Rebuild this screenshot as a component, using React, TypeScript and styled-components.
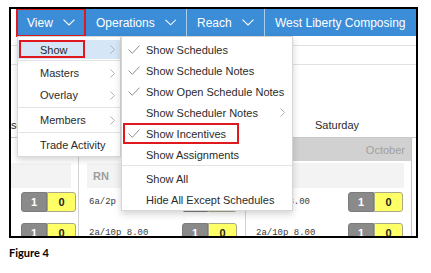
import React from "react";
import styled, { createGlobalStyle } from "styled-components";

const Global = createGlobalStyle`
  html, body { margin: 0; padding: 0; background: #fff; }
  body { font-family: "Liberation Sans", Arial, sans-serif; }
  * { box-sizing: border-box; }
`;

const Page = styled.div`
  width: 431px;
  height: 273px;
  padding: 7px 0 0 9px;
`;

const Frame = styled.div`
  position: relative;
  width: 409px;
  height: 231px;
  border: 2px solid #000;
  overflow: hidden;
  display: flex;
  flex-direction: column;
  background: #fff;
`;

const TopBar = styled.div`
  display: flex;
  height: 27px;
  padding-left: 6px;
  flex: none;
  position: relative;
  z-index: 3;
`;

const NavGroup = styled.div`
  flex: 1;
  display: flex;
  gap: 1px;
  background: #a9cdec;
`;

const NavItem = styled.div<{ $w?: number; $marked?: boolean }>`
  position: relative;
  display: flex;
  align-items: center;
  gap: 10px;
  padding: 0 10px;
  background: #3a8dd6;
  color: #fff;
  font-size: 12px;
  white-space: nowrap;
  ${(p) => (p.$w ? `width: ${p.$w}px; flex: none;` : "flex: 1;")}
  ${(p) => (p.$marked ? "outline: 2px solid #e0191e; outline-offset: -1px;" : "")}
`;

const Dropdown = styled.div`
  position: absolute;
  top: 100%;
  left: 0;
  width: 104px;
  background: #fff;
  border: 1px solid #d9d9d9;
  box-shadow: 0 3px 6px rgba(0, 0, 0, 0.16);
  padding-top: 3px;
  color: #2b2b2b;
  font-size: 11px;
  z-index: 5;
`;

const MenuItem = styled.div<{ $h?: number; $active?: boolean }>`
  position: relative;
  display: flex;
  align-items: center;
  height: ${(p) => p.$h ?? 22}px;
  padding: 0 5px 0 22px;
  background: ${(p) => (p.$active ? "#d5e6f6" : "transparent")};
`;

const Label = styled.span`
  flex: 1;
  white-space: nowrap;
`;

const Separator = styled.div<{ $m?: string }>`
  height: 1px;
  background: #e4e4e4;
  margin: ${(p) => p.$m ?? "1px 0"};
`;

const Submenu = styled.div`
  position: absolute;
  left: 103px;
  top: -4px;
  width: 172px;
  background: #fff;
  border: 1px solid #d6d6d6;
  box-shadow: 0 3px 7px rgba(0, 0, 0, 0.18);
  padding-top: 2px;
  color: #2b2b2b;
  font-size: 11px;
`;

const SubItem = styled.div`
  position: relative;
  display: flex;
  align-items: center;
  height: 21px;
  padding: 0 7px 0 6px;
`;

const CheckSlot = styled.span`
  width: 12px;
  height: 9px;
  margin-right: 6px;
  flex: none;
  display: flex;
`;

const Annotation = styled.div<{ $l: number; $t: number; $w: number; $h: number }>`
  position: absolute;
  left: ${(p) => p.$l}px;
  top: ${(p) => p.$t}px;
  width: ${(p) => p.$w}px;
  height: ${(p) => p.$h}px;
  border: 2px solid #e0191e;
  pointer-events: none;
`;

const Strip = styled.div<{ $h: number }>`
  height: ${(p) => p.$h + 1}px;
  border-bottom: 1px solid #e2e2e2;
  flex: none;
`;

const Columns = styled.div`
  display: grid;
  grid-template-columns: 67px 167px 167px;
`;

const DayHeader = styled(Columns)`
  height: 72px;
  flex: none;
`;

const DayName = styled.div<{ $indent?: number }>`
  display: flex;
  align-items: flex-end;
  padding: 0 0 5px ${(p) => p.$indent ?? 0}px;
  font-size: 11px;
  line-height: 13px;
  color: #2b2b2b;
  white-space: nowrap;
  overflow: hidden;
`;

const Grid = styled(Columns)`
  flex: 1;
  border-top: 1px solid #c9c9c9;
`;

const DayCol = styled.div<{ $first?: boolean; $last?: boolean }>`
  display: flex;
  flex-direction: column;
  border-left: ${(p) => (p.$first ? "none" : "1px solid #d2d2d2")};
  border-right: ${(p) => (p.$last ? "1px solid #c4c4c4" : "none")};
  min-width: 0;
  overflow: hidden;
`;

const DateHead = styled.div<{ $shaded?: boolean }>`
  height: 23px;
  display: flex;
  align-items: center;
  justify-content: space-between;
  padding: 0 6px 0 9px;
  background: ${(p) => (p.$shaded ? "#d1d1d1" : "transparent")};
  font-size: 11px;
  color: #a0a0a0;
  white-space: nowrap;
`;

const DateNum = styled.span`
  font-size: 12px;
  color: #8a8a8a;
  padding-top: 5px;
`;

const Band = styled.div<{ $flush?: boolean }>`
  height: 25px;
  margin: 2px 7px 0 ${(p) => (p.$flush ? 0 : 8)}px;
  background: #f3f3f3;
  display: flex;
  align-items: center;
  padding-left: 6px;
  font-size: 11px;
  font-weight: bold;
  color: #9d9d9d;
`;

const ShiftList = styled.div`
  display: flex;
  flex-direction: column;
  gap: 11px;
  padding-top: 4px;
`;

const ShiftRow = styled.div`
  height: 20px;
  display: flex;
  align-items: center;
  padding: 0 8px 0 10px;
`;

const ShiftText = styled.span`
  font-family: "Liberation Mono", "Courier New", monospace;
  font-size: 9px;
  color: #3a3a3a;
  white-space: pre;
`;

const Pair = styled.div`
  margin-left: auto;
  display: flex;
  height: 20px;
  flex: none;
`;

const Count = styled.div<{ $kind: "grey" | "yellow" }>`
  display: flex;
  align-items: center;
  justify-content: center;
  font-size: 11px;
  font-weight: bold;
  width: ${(p) => (p.$kind === "grey" ? 26 : 29)}px;
  background: ${(p) => (p.$kind === "grey" ? "#8a8a8a" : "#ffff66")};
  color: ${(p) => (p.$kind === "grey" ? "#fff" : "#222")};
  border: 1px solid ${(p) => (p.$kind === "grey" ? "#7c7c7c" : "#a9a98a")};
  border-radius: ${(p) => (p.$kind === "grey" ? "3px 0 0 3px" : "0 3px 3px 0")};
`;

const Caption = styled.div`
  margin-top: 8px;
  font-family: Lato, "Open Sans", sans-serif;
  font-weight: bold;
  font-size: 11px;
  line-height: 14px;
  color: #000;
`;

const Chevron = () => (
  <svg width="12" height="7" viewBox="0 0 12 7">
    <polyline points="0.5,0.6 6,6 11.5,0.6" fill="none" stroke="#fff" strokeWidth="1.1" />
  </svg>
);

const Arrow = () => (
  <svg width="5" height="9" viewBox="0 0 5 9">
    <polyline points="0.5,0.5 4.5,4.5 0.5,8.5" fill="none" stroke="#b0b0b0" strokeWidth="1" />
  </svg>
);

const Check = () => (
  <svg width="12" height="9" viewBox="0 0 12 9">
    <polyline points="0.5,4.5 4.3,8.3 11.5,0.6" fill="none" stroke="#8e8e8e" strokeWidth="1" />
  </svg>
);

const subItems: { label: string; checked?: boolean; more?: boolean; marked?: boolean; sepAfter?: boolean }[] = [
  { label: "Show Schedules", checked: true },
  { label: "Show Schedule Notes", checked: true },
  { label: "Show Open Schedule Notes", checked: true },
  { label: "Show Scheduler Notes", more: true },
  { label: "Show Incentives", checked: true, marked: true },
  { label: "Show Assignments", sepAfter: true },
  { label: "Show All" },
  { label: "Hide All Except Schedules" },
];

const Badges = () => (
  <Pair>
    <Count $kind="grey">1</Count>
    <Count $kind="yellow">0</Count>
  </Pair>
);

export default function App() {
  return (
    <>
      <Global />
      <Page>
        <Frame>
          <TopBar>
            <NavGroup>
              <NavItem $w={68} $marked>
                <span>View</span>
                <Chevron />
                <Dropdown>
                  <MenuItem $h={19} $active>
                    <Annotation $l={1} $t={0} $w={66} $h={18} />
                    <Label>Show</Label>
                    <Arrow />
                    <Submenu>
                      {subItems.map((it) => (
                        <React.Fragment key={it.label}>
                          <SubItem>
                            {it.marked && <Annotation $l={1} $t={0} $w={116} $h={21} />}
                            <CheckSlot>{it.checked && <Check />}</CheckSlot>
                            <Label>{it.label}</Label>
                            {it.more && <Arrow />}
                          </SubItem>
                          {it.sepAfter && <Separator $m="0 0 2px" />}
                        </React.Fragment>
                      ))}
                    </Submenu>
                  </MenuItem>
                  <Separator />
                  <MenuItem>
                    <Label>Masters</Label>
                    <Arrow />
                  </MenuItem>
                  <MenuItem>
                    <Label>Overlay</Label>
                    <Arrow />
                  </MenuItem>
                  <Separator />
                  <MenuItem>
                    <Label>Members</Label>
                    <Arrow />
                  </MenuItem>
                  <Separator />
                  <MenuItem>
                    <Label>Trade Activity</Label>
                  </MenuItem>
                </Dropdown>
              </NavItem>
              <NavItem $w={100}>
                <span>Operations</span>
                <Chevron />
              </NavItem>
              <NavItem $w={77}>
                <span>Reach</span>
                <Chevron />
              </NavItem>
              <NavItem>
                <span>West Liberty Composing</span>
              </NavItem>
            </NavGroup>
          </TopBar>
          <Strip $h={9} />
          <Strip $h={18} />
          <DayHeader>
            <DayName>sc</DayName>
            <DayName />
            <DayName $indent={70}>Saturday</DayName>
          </DayHeader>
          <Grid>
            <DayCol $first>
              <DateHead>
                <span />
                <span>October</span>
              </DateHead>
              <Band $flush />
              <ShiftList>
                <ShiftRow>
                  <Badges />
                </ShiftRow>
                <ShiftRow>
                  <Badges />
                </ShiftRow>
              </ShiftList>
            </DayCol>
            <DayCol>
              <DateHead>
                <DateNum>20</DateNum>
                <span />
              </DateHead>
              <Band>RN</Band>
              <ShiftList>
                <ShiftRow>
                  <ShiftText>6a/2p</ShiftText>
                  <Badges />
                </ShiftRow>
                <ShiftRow>
                  <ShiftText>2a/10p 8.00</ShiftText>
                  <Badges />
                </ShiftRow>
              </ShiftList>
            </DayCol>
            <DayCol $last>
              <DateHead $shaded>
                <span />
                <span>October</span>
              </DateHead>
              <Band />
              <ShiftList>
                <ShiftRow>
                  <ShiftText>6a/2p 8.00</ShiftText>
                  <Badges />
                </ShiftRow>
                <ShiftRow>
                  <ShiftText>2a/10p 8.00</ShiftText>
                  <Badges />
                </ShiftRow>
              </ShiftList>
            </DayCol>
          </Grid>
        </Frame>
        <Caption>Figure 4</Caption>
      </Page>
    </>
  );
}
